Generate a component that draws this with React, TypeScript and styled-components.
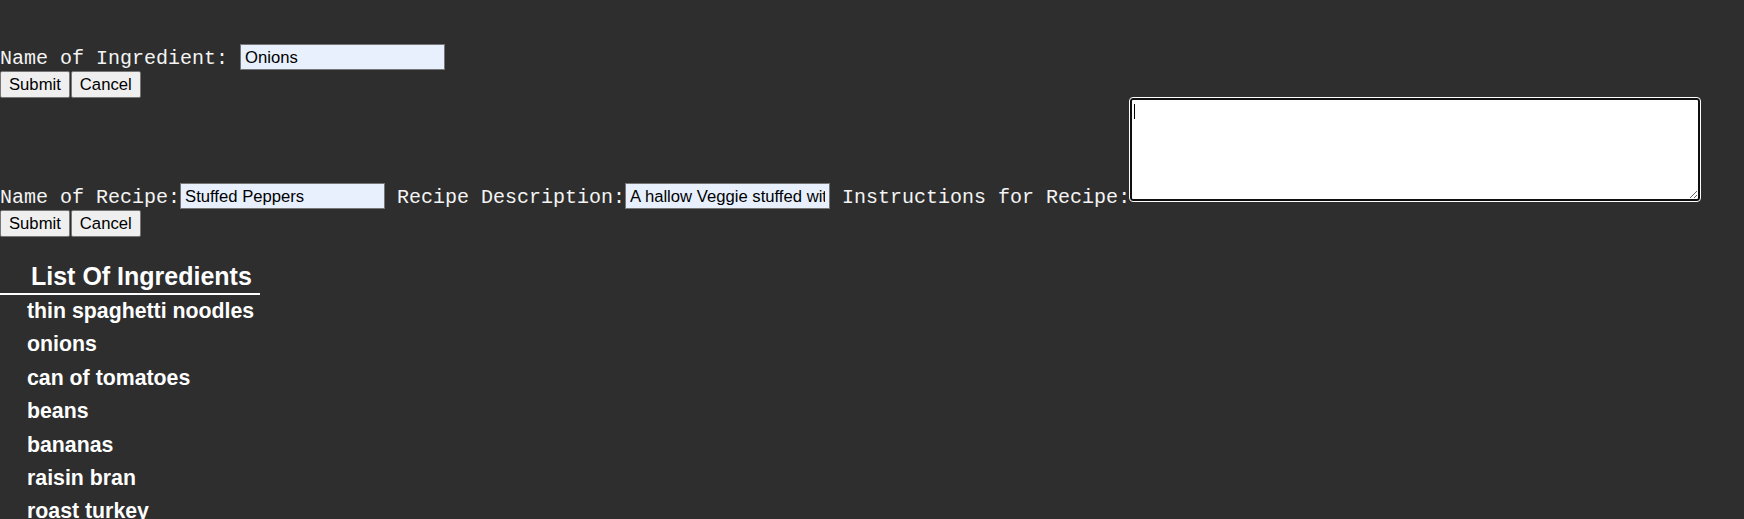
import styled, { createGlobalStyle } from 'styled-components';

const GlobalStyle = createGlobalStyle`
  html, body {
    margin: 0;
    padding: 0;
    background: #2e2e2e;
  }
`;

const Page = styled.div`
  min-height: 100vh;
  padding-top: 44px;
  color: #fff;
`;

const Form = styled.form`
  display: flex;
  flex-direction: column;
  align-items: flex-start;
`;

const FieldLine = styled.div`
  display: flex;
  align-items: flex-end;
`;

const Label = styled.label`
  font-family: "Liberation Mono", "Courier New", monospace;
  font-size: 20px;
  line-height: 22px;
  white-space: pre;
  color: #f4f4f4;
`;

const TextInput = styled.input`
  box-sizing: border-box;
  width: 205px;
  height: 26px;
  margin: 0;
  padding: 2px 4px 0;
  border: 1px solid #767676;
  border-radius: 0;
  background: #e8f0fe;
  color: #000;
  font-family: "Liberation Sans", Arial, sans-serif;
  font-size: 16.67px;
  outline: none;
`;

const NoteBox = styled.span`
  position: relative;
  display: block;
  margin-bottom: 8px;
`;

const NoteArea = styled.textarea`
  display: block;
  box-sizing: border-box;
  width: 570px;
  height: 103px;
  margin: 0;
  padding: 3px;
  border: 2px solid #101010;
  border-radius: 3px;
  outline: 1px solid #fff;
  background: #fff;
  font-family: "Liberation Mono", monospace;
  font-size: 16px;
`;

const Caret = styled.span`
  position: absolute;
  left: 4px;
  top: 6px;
  width: 1px;
  height: 15px;
  background: #000;
`;

const ButtonRow = styled.div`
  display: flex;
  gap: 1px;
  margin-top: 1px;
`;

const Button = styled.button`
  box-sizing: border-box;
  height: 27px;
  margin: 0;
  padding: 0 8px;
  border: 1px solid #767676;
  border-radius: 2px;
  background: #efefef;
  color: #000;
  font-family: "Liberation Sans", Arial, sans-serif;
  font-size: 16.67px;
`;

const Heading = styled.h3`
  width: fit-content;
  margin: 25px 0 0;
  padding: 0 8px 3px 31px;
  border-bottom: 2px solid #fff;
  font-family: "Liberation Sans", Arial, sans-serif;
  font-size: 25px;
  line-height: 28px;
  font-weight: 700;
`;

const IngredientList = styled.ul`
  list-style: none;
  margin: 0;
  padding: 0 0 0 27px;
`;

const Ingredient = styled.li`
  font-family: "Liberation Sans", Arial, sans-serif;
  font-size: 21.3px;
  font-weight: 700;
  line-height: 33.4px;
`;

const ingredients = [
  'thin spaghetti noodles',
  'onions',
  'can of tomatoes',
  'beans',
  'bananas',
  'raisin bran',
  'roast turkey',
];

const FormButtons = () => (
  <ButtonRow>
    <Button type="submit">Submit</Button>
    <Button type="button">Cancel</Button>
  </ButtonRow>
);

const App = () => {
  return (
    <Page>
      <GlobalStyle />
      <Form onSubmit={(e) => e.preventDefault()}>
        <FieldLine>
          <Label htmlFor="ingredient">Name of Ingredient: </Label>
          <TextInput id="ingredient" defaultValue="Onions" />
        </FieldLine>
        <FormButtons />
      </Form>
      <Form onSubmit={(e) => e.preventDefault()}>
        <FieldLine>
          <Label htmlFor="recipe">Name of Recipe:</Label>
          <TextInput id="recipe" defaultValue="Stuffed Peppers" />
          <Label htmlFor="description"> Recipe Description:</Label>
          <TextInput
            id="description"
            defaultValue="A hallow Veggie stuffed with rice and beans"
          />
          <Label htmlFor="instructions"> Instructions for Recipe:</Label>
          <NoteBox>
            <NoteArea id="instructions" />
            <Caret />
          </NoteBox>
        </FieldLine>
        <FormButtons />
      </Form>
      <Heading>List Of Ingredients</Heading>
      <IngredientList>
        {ingredients.map((item) => (
          <Ingredient key={item}>{item}</Ingredient>
        ))}
      </IngredientList>
    </Page>
  );
};

export default App;
